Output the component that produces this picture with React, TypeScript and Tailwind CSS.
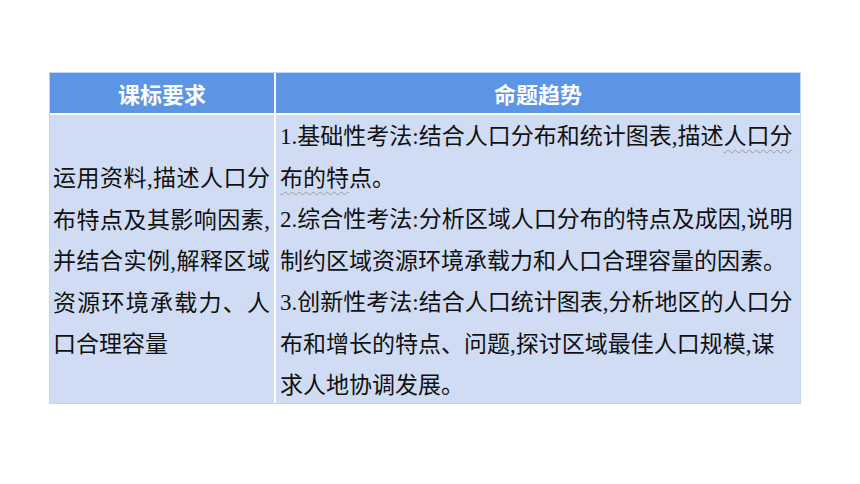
export default function App() {
  const body = "font-['Liberation_Serif','Noto_Sans_CJK_SC',sans-serif] text-[23px] leading-[41.5px] text-[#111] whitespace-nowrap";
  const squiggle = "underline decoration-wavy decoration-[#9a9a9a] decoration-1 underline-offset-[5px]";
  const spread = "w-[217px] text-justify [text-align-last:justify]";

  return (
    <div className="min-h-screen w-full bg-white pt-[72px] pl-[49px]">
      <div className="w-[752px] border border-[#c4d5f2] bg-white">
        <div className="grid grid-cols-[224px_524px] grid-rows-[40px_288px] gap-[2px]">
          {/* header */}
          <div className="flex items-center justify-center bg-[#5c95e4] font-['Noto_Sans_CJK_SC',sans-serif] text-[22px] font-bold text-white">
            课标要求
          </div>
          <div className="flex items-center justify-center bg-[#5c95e4] font-['Noto_Sans_CJK_SC',sans-serif] text-[22px] font-bold text-white">
            命题趋势
          </div>

          {/* body */}
          <div className={`flex flex-col justify-center bg-[#d0dcf3] pl-[3px] pt-[6px] ${body}`}>
            <div className={spread}>运用资料,描述人口分</div>
            <div className={spread}>布特点及其影响因素,</div>
            <div className={spread}>并结合实例,解释区域</div>
            <div className={spread}>资源环境承载力、人</div>
            <div>口合理容量</div>
          </div>
          <div className={`overflow-hidden bg-[#d0dcf3] pl-[4px] pt-[1px] ${body}`}>
            <div>
              1.基础性考法:结合人口分布和统计图表,描述<span className={squiggle}>人口分</span>
            </div>
            <div>
              <span className={squiggle}>布的特</span>点。
            </div>
            <div>2.综合性考法:分析区域人口分布的特点及成因,说明</div>
            <div>制约区域资源环境承载力和人口合理容量的因素。</div>
            <div>3.创新性考法:结合人口统计图表,分析地区的人口分</div>
            <div>布和增长的特点、问题,探讨区域最佳人口规模,谋</div>
            <div>求人地协调发展。</div>
          </div>
        </div>
      </div>
    </div>
  );
}
